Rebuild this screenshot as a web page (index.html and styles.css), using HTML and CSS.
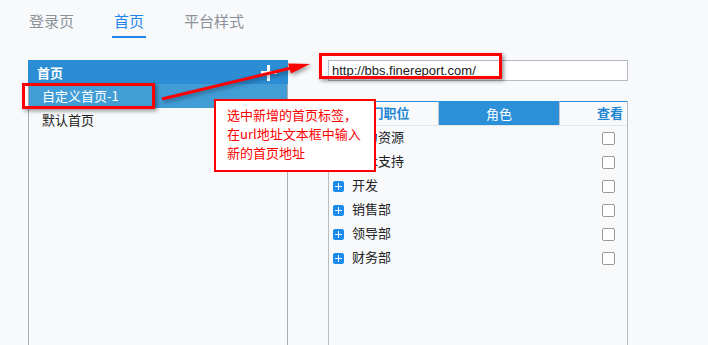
FILE: index.html
```html
<!DOCTYPE html>
<html lang="zh-CN">
<head>
<meta charset="UTF-8">
<title>首页设置</title>
<link rel="stylesheet" href="styles.css">
</head>
<body>
<div class="top-tabs">
  <span class="tab">登录页</span>
  <span class="tab active">首页</span>
  <span class="tab">平台样式</span>
</div>

<div class="main">
  <div class="home-list">
    <div class="list-head">
      <span>首页</span>
      <span class="add"></span>
    </div>
    <div class="list-body">
      <div class="list-item selected">自定义首页-1</div>
      <div class="list-item">默认首页</div>
    </div>
  </div>

  <div class="detail">
    <input class="url" type="text" value="http://bbs.finereport.com/">
    <div class="auth">
      <div class="auth-tabs">
        <div class="auth-tab">部门职位</div>
        <div class="auth-tab current">角色</div>
        <div class="auth-tab view">查看</div>
      </div>
      <div class="auth-rows">
        <div class="row"><span class="expand"></span><span class="name">人力资源</span><span class="check"></span></div>
        <div class="row"><span class="expand"></span><span class="name">技术支持</span><span class="check"></span></div>
        <div class="row"><span class="expand"></span><span class="name">开发</span><span class="check"></span></div>
        <div class="row"><span class="expand"></span><span class="name">销售部</span><span class="check"></span></div>
        <div class="row"><span class="expand"></span><span class="name">领导部</span><span class="check"></span></div>
        <div class="row"><span class="expand"></span><span class="name">财务部</span><span class="check"></span></div>
      </div>
    </div>
  </div>
</div>

<!-- annotation layer -->
<div class="mark mark-item"></div>
<div class="mark mark-url"></div>
<svg class="arrow" width="708" height="345" viewBox="0 0 708 345">
  <line x1="162" y1="99" x2="291" y2="68" stroke="#f00" stroke-width="3"/>
  <polygon points="310,64 291,73.5 288,63.5" fill="#f00"/>
</svg>
<div class="callout">
  选中新增的首页标签，<br>
  在url地址文本框中输入<br>
  新的首页地址
</div>
</body>
</html>
```

FILE: styles.css
```css
body {
  margin: 0;
  width: 708px;
  height: 345px;
  overflow: hidden;
  background-color: #f7f9fb;
  font-family: "Noto Sans CJK SC", "Liberation Sans", sans-serif;
  font-size: 13px;
  color: #222;
  position: relative;
}

/* top tabs */
.top-tabs {
  display: flex;
  gap: 36px;
  padding: 11px 0 0 27px;
  height: 49px;
}
.tab {
  font-size: 15px;
  line-height: 20px;
  height: 20px;
  padding: 0 2px 5px;
  color: #8c9099;
}
.tab.active {
  color: #1f86ec;
  border-bottom: 2px solid #1f86ec;
}

.main {
  display: flex;
  height: 285px;
}

/* left list of home pages */
.home-list {
  margin-left: 28px;
  width: 260px;
  display: flex;
  flex-direction: column;
}
.list-head {
  height: 24px;
  background-color: #2b8dd4;
  color: white;
  font-weight: bold;
  display: flex;
  align-items: center;
  justify-content: space-between;
  padding: 0 11px 0 9px;
}
.add {
  flex-shrink: 0;
  width: 16px;
  height: 16px;
  position: relative;
  margin-top: 1px;
}
.add::before, .add::after {
  content: "";
  position: absolute;
  background: white;
}
.add::before {
  left: 0;
  top: 6px;
  width: 16px;
  height: 3px;
}
.add::after {
  left: 6px;
  top: 0;
  width: 3px;
  height: 16px;
}
.list-body {
  flex: 1;
  border-left: 1px solid #a9acb0;
  border-right: 1px solid #a9acb0;
}
.list-item {
  height: 24px;
  line-height: 23px;
  padding-left: 13px;
}
.list-item.selected {
  background-color: #429dd6;
  color: white;
}

/* right detail */
.detail {
  margin-left: 40px;
  width: 300px;
  display: flex;
  flex-direction: column;
}
.url {
  box-sizing: border-box;
  height: 21px;
  width: 300px;
  margin: 0;
  border: 1px solid #b5b9c3;
  background: white;
  padding: 0 3px;
  font-family: "Liberation Sans", sans-serif;
  font-size: 13px;
  color: #222;
  outline: none;
}
.auth {
  margin-top: 20px;
  flex: 1;
  border-left: 1px solid #b9bcc1;
  border-right: 1px solid #b9bcc1;
}
.auth-tabs {
  display: flex;
  height: 25px;
  box-sizing: border-box;
  border-bottom: 1px solid #e4e7eb;
}
.auth-tab {
  line-height: 22px;
  border-top: 1px solid #2b8fd7;
  color: #2186d2;
  font-weight: bold;
  text-align: center;
  width: 109px;
  border-right: 1px solid #c4c7cc;
}
.auth-tab.current {
  width: 120px;
  background-color: #2b90d8;
  color: white;
  font-weight: normal;
  border-right: none;
  line-height: 23px;
}
.auth-tab.view {
  flex: 1;
  text-align: right;
  padding-right: 4px;
  border-left: 1px solid #c4c7cc;
  border-right: none;
}
.row {
  height: 24px;
  display: flex;
  align-items: center;
  padding-left: 4px;
}
.expand {
  width: 11px;
  height: 11px;
  border-radius: 2px;
  background-color: #1a8bf0;
  position: relative;
  margin-right: 8px;
}
.expand::before, .expand::after {
  content: "";
  position: absolute;
  background: white;
}
.expand::before {
  left: 2px;
  top: 5px;
  width: 7px;
  height: 1px;
}
.expand::after {
  left: 5px;
  top: 2px;
  width: 1px;
  height: 7px;
}
.name {
  flex: 1;
  line-height: 20px;
  margin-top: -2px;
}
.check {
  box-sizing: border-box;
  width: 13px;
  height: 13px;
  border: 1px solid #9a9a9a;
  border-radius: 2px;
  background: white;
  margin-right: 12px;
}

/* annotations */
.mark {
  position: absolute;
  box-sizing: border-box;
  border: 3px solid #f00;
  box-shadow: 2px 2px 4px rgba(0,0,0,0.4);
}
.mark-item {
  left: 22px;
  top: 83px;
  width: 133px;
  height: 26px;
}
.mark-url {
  left: 319px;
  top: 53px;
  width: 183px;
  height: 26px;
}
.arrow {
  position: absolute;
  left: 0;
  top: 0;
  pointer-events: none;
  filter: drop-shadow(2px 2px 2px rgba(0,0,0,0.4));
}
.callout {
  position: absolute;
  left: 214px;
  top: 99px;
  width: 162px;
  height: 73px;
  box-sizing: border-box;
  border: 2px solid #f00;
  background: white;
  color: #f00;
  padding: 4px 0 0 11px;
  line-height: 19px;
  font-size: 13px;
}
```
